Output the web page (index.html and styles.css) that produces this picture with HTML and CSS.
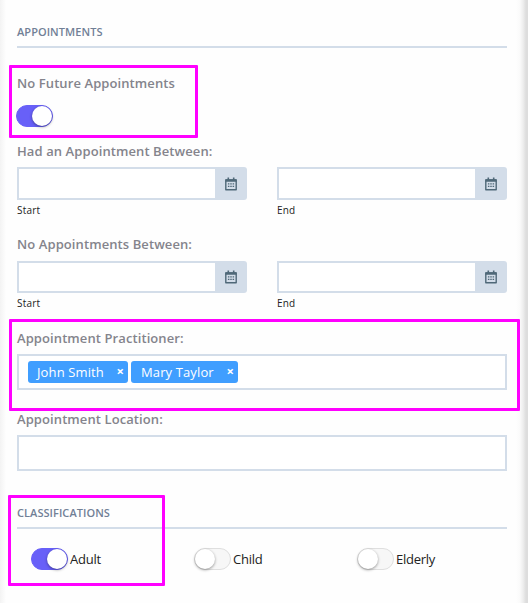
FILE: index.html
```
<!DOCTYPE html>
<html lang="en">

<head>
    <meta charset="UTF-8">
    <meta name="viewport" content="width=device-width, initial-scale=1.0">
    <title>Appointment Filters</title>
    <link rel="stylesheet" href="styles.css">
</head>

<body>
    <svg class="icon-defs" width="0" height="0">
        <symbol id="calendar" viewBox="0 0 12 14">
            <path d="M.8 3h10.4v9.8H.8z" fill="none" stroke="currentColor" stroke-width="1.4" stroke-linejoin="round" />
            <path d="M.5 2.2h11v2.5H.5zM2.5 .5h1.6v2H2.5zM7.9 .5h1.6v2H7.9z" fill="currentColor" />
            <path d="M2.9 6.3h1.5v1.3H2.9zM5.25 6.3h1.5v1.3h-1.5zM7.6 6.3h1.5v1.3H7.6zM2.9 8.7h1.5V10H2.9zM5.25 8.7h1.5V10h-1.5zM7.6 8.7h1.5V10H7.6z" fill="currentColor" />
        </symbol>
    </svg>

    <form class="panel">
        <h2 class="section-title">Appointments</h2>

        <div class="field future highlight">
            <label class="field-label" for="no-future">No Future Appointments</label>
            <input class="switch" type="checkbox" id="no-future" checked>
        </div>

        <div class="field had-between">
            <div class="field-label">Had an Appointment Between:</div>
            <div class="date-row">
                <div class="date-field">
                    <div class="date-group">
                        <input type="text" id="had-start">
                        <button type="button" aria-label="Pick date"><svg class="icon"><use href="#calendar" /></svg></button>
                    </div>
                    <label class="hint" for="had-start">Start</label>
                </div>
                <div class="date-field">
                    <div class="date-group">
                        <input type="text" id="had-end">
                        <button type="button" aria-label="Pick date"><svg class="icon"><use href="#calendar" /></svg></button>
                    </div>
                    <label class="hint" for="had-end">End</label>
                </div>
            </div>
        </div>

        <div class="field none-between">
            <div class="field-label">No Appointments Between:</div>
            <div class="date-row">
                <div class="date-field">
                    <div class="date-group">
                        <input type="text" id="none-start">
                        <button type="button" aria-label="Pick date"><svg class="icon"><use href="#calendar" /></svg></button>
                    </div>
                    <label class="hint" for="none-start">Start</label>
                </div>
                <div class="date-field">
                    <div class="date-group">
                        <input type="text" id="none-end">
                        <button type="button" aria-label="Pick date"><svg class="icon"><use href="#calendar" /></svg></button>
                    </div>
                    <label class="hint" for="none-end">End</label>
                </div>
            </div>
        </div>

        <div class="field practitioner highlight">
            <div class="field-label">Appointment Practitioner:</div>
            <div class="tag-box">
                <span class="tag tag-john">John Smith <b>×</b></span>
                <span class="tag tag-mary">Mary Taylor <b>×</b></span>
            </div>
        </div>

        <div class="field location">
            <div class="field-label">Appointment Location:</div>
            <div class="tag-box"></div>
        </div>

        <div class="classifications highlight">
            <h2 class="section-title">Classifications</h2>
            <div class="switch-row">
                <label><input class="switch" type="checkbox" checked>Adult</label>
                <label><input class="switch" type="checkbox">Child</label>
                <label><input class="switch" type="checkbox">Elderly</label>
            </div>
        </div>
    </form>
</body>

</html>
```
FILE: styles.css
```
*,
*::before,
*::after {
    box-sizing: border-box;
    margin: 0;
    padding: 0;
}

body {
    font-family: 'Open Sans', sans-serif;
    font-size: 13px;
    color: #222;
    height: 603px;
    overflow: hidden;
    background:
        linear-gradient(to right, #f3f3f3, rgba(255, 255, 255, 0) 6px),
        linear-gradient(to left, #dddddd 2px, #eeeeee 5px, #fafafa 8px, rgba(255, 255, 255, 0) 12px),
        #fefefe;
}

.icon-defs {
    position: absolute;
}

.panel {
    padding: 22px 21px 0 17px;
}

.section-title {
    height: 26px;
    line-height: 20px;
    font-size: 11px;
    font-weight: 600;
    letter-spacing: 0.06px;
    text-transform: uppercase;
    color: #718096;
    border-bottom: 2px solid #d3dde9;
}

.field-label {
    display: block;
    line-height: 20px;
    font-weight: 600;
    letter-spacing: 0.09px;
    color: #84848c;
    margin-bottom: 6px;
}

/* magenta callout frames */
.highlight {
    position: relative;
}

.highlight::after {
    content: '';
    position: absolute;
    border: 3px solid #ff00ff;
    border-radius: 1px;
    pointer-events: none;
}

.future {
    margin-top: 25px;
    height: 68px;
}

.future .field-label {
    margin-bottom: 12px;
}

.future .switch {
    margin-left: -1px;
}

.future::after {
    top: -8px;
    left: -8px;
    width: 189px;
    height: 73px;
}

.had-between {
    height: 93px;
}

.none-between {
    height: 94px;
}

.none-between .field-label {
    margin-bottom: 7px;
}

.none-between .date-group {
    height: 32px;
}

.practitioner {
    height: 81px;
}

.practitioner::after {
    top: -9px;
    left: -8px;
    width: 511px;
    height: 92px;
}

.location {
    height: 94px;
}

.classifications::after {
    top: -8px;
    left: -9px;
    width: 157px;
    height: 91px;
}

.date-row {
    display: flex;
    gap: 30px;
}

.date-field {
    width: 230px;
}

.date-group {
    display: flex;
    height: 33px;
}

.date-group input {
    width: 198px;
    border: 2px solid #d3dde9;
    border-right: none;
    background: #fff;
    outline: none;
}

.date-group button {
    width: 32px;
    border: none;
    border-radius: 0 3px 3px 0;
    background: #d3dde9;
    color: #4f6878;
    display: flex;
    align-items: center;
    justify-content: center;
}

.icon {
    width: 12px;
    height: 14px;
}

.hint {
    display: block;
    font-size: 10px;
    line-height: 14px;
    letter-spacing: 0.2px;
    margin-top: 3px;
}

.tag-box {
    display: flex;
    gap: 3px;
    height: 36px;
    padding: 5px 9px;
    border: 2px solid #d3dde9;
    background: #fff;
}

.tag {
    display: flex;
    justify-content: space-between;
    height: 22px;
    line-height: 22px;
    padding: 0 4px 0 9px;
    border-radius: 3px;
    background: #409eff;
    color: #fff;
    letter-spacing: 0.12px;
}

.tag-john {
    width: 100px;
}

.tag-mary {
    width: 107px;
    padding-left: 10px;
}

.tag b {
    font-size: 13px;
    line-height: 20px;
}

.switch {
    appearance: none;
    display: block;
    flex: none;
    width: 37px;
    height: 22px;
    border: 1px solid #dfdfdf;
    border-radius: 11px;
    background: #f7f7f7;
}

.switch::before {
    content: '';
    display: block;
    width: 20px;
    height: 20px;
    border-radius: 50%;
    background: #fff;
    box-shadow: 0 1px 3px rgba(0, 0, 0, 0.4);
}

.switch:checked {
    border-color: #6860f8;
    background: #6860f8;
}

.switch:checked::before {
    margin-left: 15px;
}

.switch-row {
    display: grid;
    grid-template-columns: repeat(3, 163px);
    padding: 19px 0 0 14px;
    width: 503px;
}

.switch-row label {
    display: flex;
    align-items: center;
    gap: 2px;
    height: 22px;
    line-height: 20px;
    letter-spacing: -0.25px;
}
```
